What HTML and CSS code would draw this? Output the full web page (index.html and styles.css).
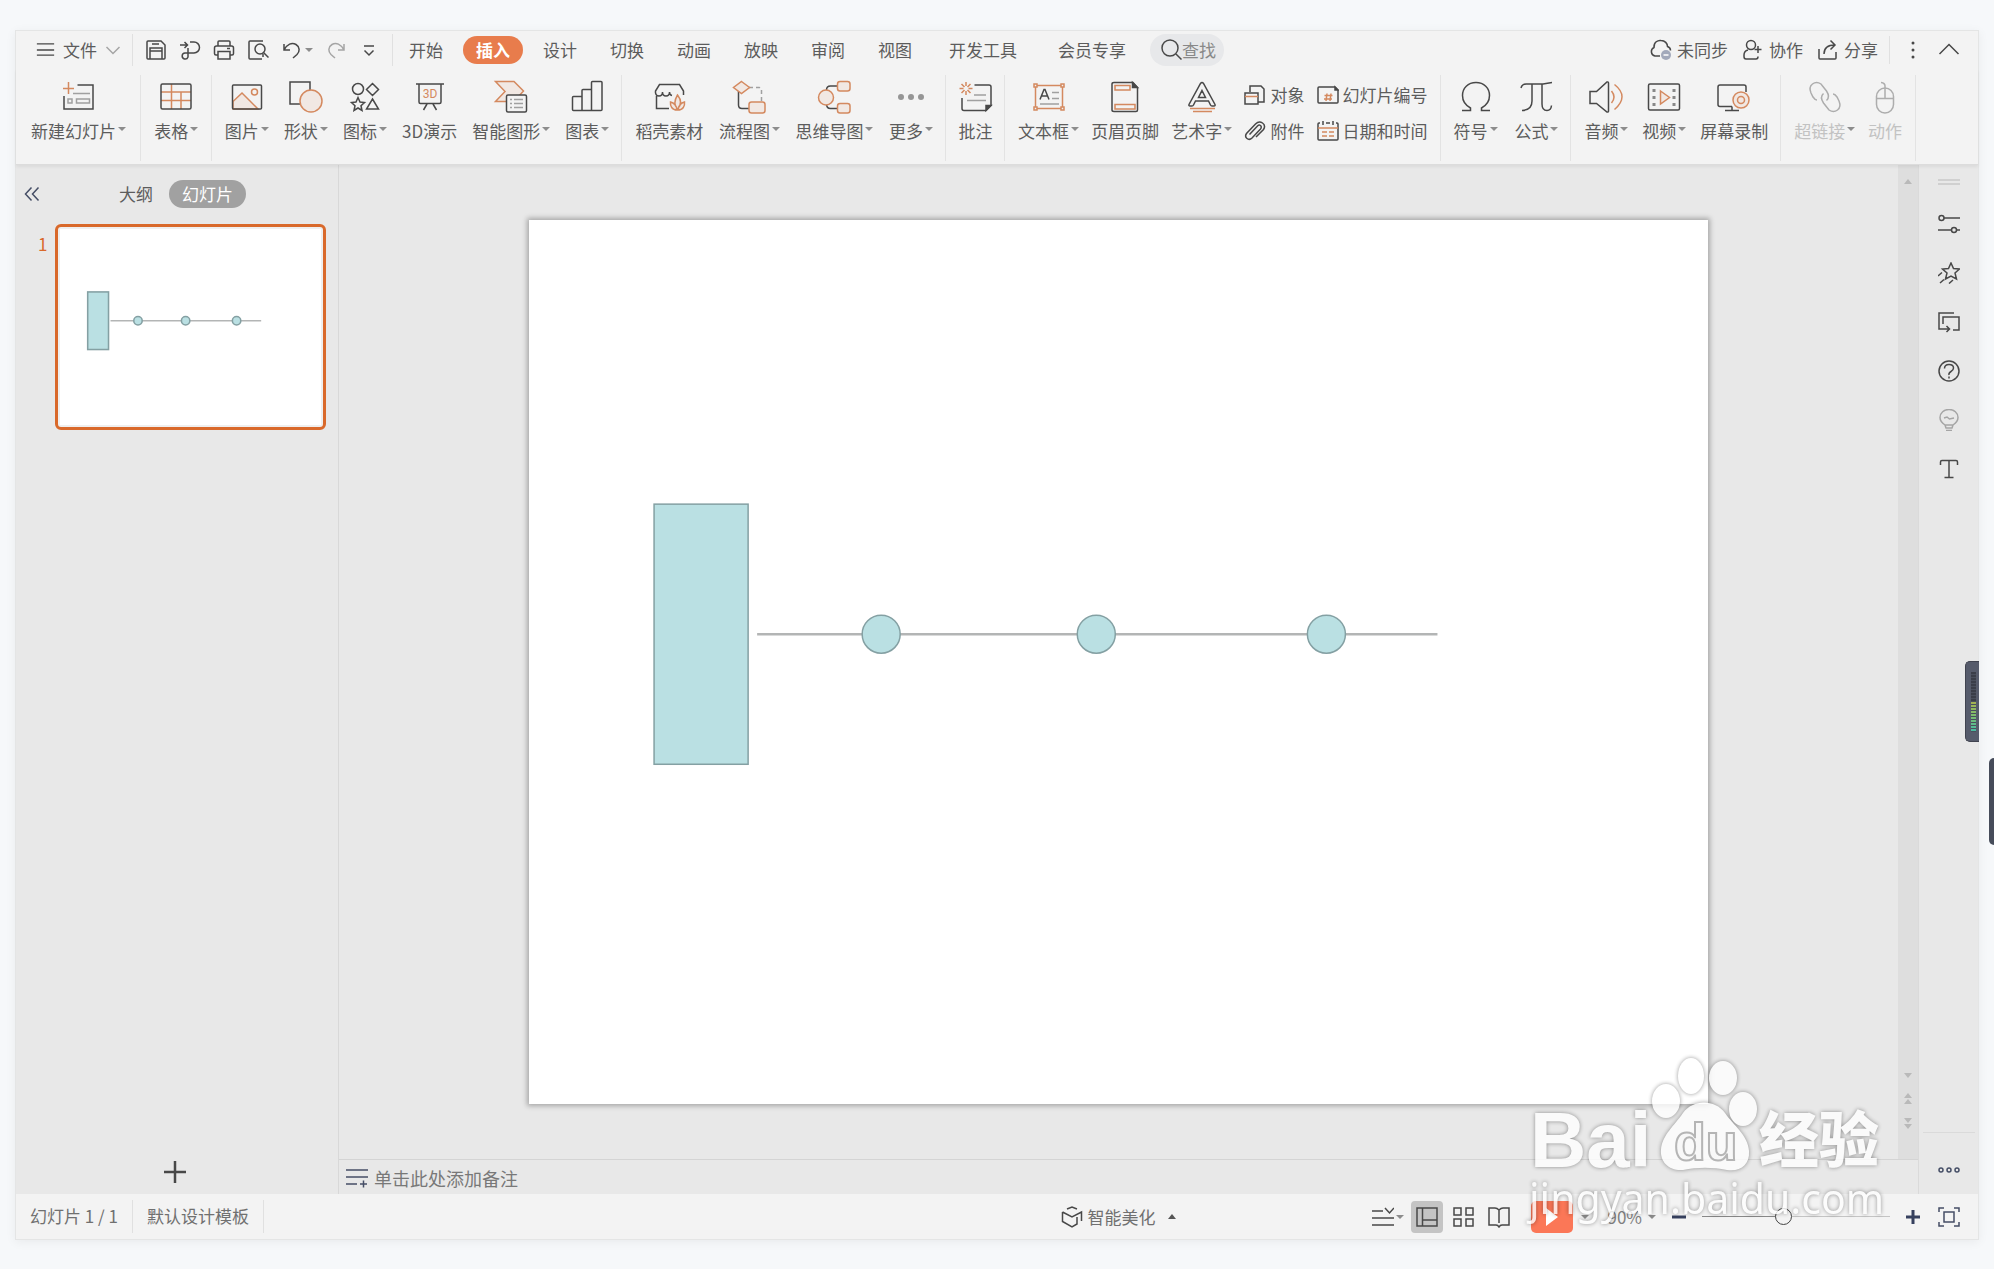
FILE: index.html
```html
<!DOCTYPE html>
<html lang="zh-CN">
<head>
  <meta charset="UTF-8" />
  <meta name="viewport" content="width=device-width, initial-scale=1.0"/>
  <title>演示文稿</title>
  <link rel="stylesheet" href="styles.css">
</head>
<body>
<div class="window">

  <!-- 菜单栏 -->
  <header class="menubar">
    <button class="file-menu">
      <svg class="icon-s" viewBox="0 0 22 22"><path d="M1 4h20M1 11h20M1 17h20"/></svg>
      <span>文件</span>
      <svg class="chevron light" viewBox="0 0 16 16"><path d="M1.500 5 8 11.500 14.500 5"/></svg>
    </button>
    <div class="quick">
      <button aria-label="保存"><svg class="icon-s" viewBox="0 0 22 22"><path d="M3 2h13l4 4v13q0 1-1 1H3q-1 0-1-1V3q0-1 1-1zM5 20V9h12v11M7 5h7M5 12h12"/></svg></button>
      <button aria-label="输出为PDF"><svg class="icon-s" viewBox="0 0 22 22"><path d="M1 6h7M5.500 3 8.500 6l-3 3M11 3h4a5.500 5.500 0 0 1 0 11H6a3 3 0 1 0 3 4V9"/></svg></button>
      <button aria-label="打印"><svg class="icon-s" viewBox="0 0 22 22"><path d="M5 7V3q0-1 1-1h10q1 0 1 1v4M5 16H3q-1.500 0-1.500-1.500V9q0-2 2-2h15q2 0 2 2v5.500q0 1.500-1.500 1.500h-2M5 12.500h12V20H5zM14 9.500h3"/></svg></button>
      <button aria-label="打印预览"><svg class="icon-s" viewBox="0 0 22 22"><path d="M15 20H3q-1 0-1-1V3q0-1 1-1h13M16 15v3"/><circle cx="13" cy="10" r="5"/><path d="m16.500 13.500 5 5"/></svg></button>
      <button aria-label="撤销" class="with-caret"><svg class="icon-s" viewBox="0 0 22 22"><path d="M3 5v6h6M3 11C6 5 11 3 15 5.500s4 7 1 10L12 19"/></svg><i class="caret"></i></button>
      <button aria-label="恢复"><svg class="icon-s faint" viewBox="0 0 22 22"><path d="M19 5v6h-6M19 11C16 5 11 3 7 5.500s-4 7-1 10L10 19"/></svg></button>
      <button aria-label="自定义快速访问工具栏"><svg class="icon-s" viewBox="0 0 22 22"><path d="M6 7h10M6.500 11.500 11 16l4.500-4.500"/></svg></button>
    </div>
    <nav class="tabs">
      <button>开始</button>
      <button class="active">插入</button>
      <button>设计</button>
      <button>切换</button>
      <button>动画</button>
      <button>放映</button>
      <button>审阅</button>
      <button>视图</button>
      <button class="wide">开发工具</button>
      <button class="wide">会员专享</button>
      <button class="search"><svg class="icon-s" viewBox="0 0 22 22"><circle cx="10" cy="9" r="8"/><path d="m16 15 5.500 5.500"/></svg>查找</button>
    </nav>
    <div class="account">
      <button><svg class="icon-s" viewBox="0 0 22 22"><path d="M10 17H5a4.500 4.500 0 0 1-1-8.500C3.500 3 8 1 11 1.500c4 0 6.500 3 6.500 6 2 .7 3 2 3 4"/><circle class="badge" cx="16" cy="16" r="5"/><path class="badge-line" d="M13.500 16h5"/></svg>未同步</button>
      <button><svg class="icon-s" viewBox="0 0 22 22"><circle cx="9" cy="6" r="4.500"/><path d="M6 11q-4 1-4 5v1.500Q2 20 4 20h10q2 0 2-2.500M16 7v7M12.500 10.500h7"/></svg>协作</button>
      <button><svg class="icon-s" viewBox="0 0 22 22"><path d="M2 10v9q0 1 1 1h15q1 0 1-1v-6M7 15c0-6 3-9 11-9M13.500 1.500 18 6l-4.500 4.500"/></svg>分享</button>
    </div>
    <div class="corner">
      <button aria-label="更多操作"><svg class="icon-s solid" viewBox="0 0 22 22"><circle cx="11" cy="4" r="1.500"/><circle cx="11" cy="11" r="1.500"/><circle cx="11" cy="18" r="1.500"/></svg></button>
      <button aria-label="折叠功能区"><svg class="icon-s" viewBox="0 0 22 22"><path d="m1.500 15 9.500-9.500L20.500 15"/></svg></button>
    </div>
  </header>

  <!-- 插入选项卡 -->
  <div class="ribbon">
    <div class="group centered">
      <button class="tool">
        <svg class="icon" viewBox="0 0 36 36"><path class="o" d="M3 9.500h11M8.500 3v12"/><path d="M17.500 6H33v24H4V17"/><path class="g" d="M13 14.500h17M8 20h4v4H8zM16.500 20h13v4h-13z"/></svg>
        <span class="label">新建幻灯片<i class="caret"></i></span>
      </button>
    </div>
    <div class="group centered">
      <button class="tool">
        <svg class="icon" viewBox="0 0 36 36"><path class="o" d="M13.500 5v25M3 13h30M3 21.500h30M23 13v17"/><rect x="3" y="5" width="30" height="25" rx="1.500"/></svg>
        <span class="label">表格<i class="caret"></i></span>
      </button>
    </div>
    <div class="group">
      <button class="tool">
        <svg class="icon" viewBox="0 0 36 36"><path class="of" d="M4 22.500 13 14l16 16H4z"/><circle class="o" cx="25.500" cy="13" r="3"/><rect x="3.500" y="6" width="29" height="24" rx="1"/></svg>
        <span class="label">图片<i class="caret"></i></span>
      </button>
      <button class="tool">
        <svg class="icon" viewBox="0 0 36 36"><path d="M2 3h20v22H2z"/><circle class="of" cx="23" cy="22" r="11"/></svg>
        <span class="label">形状<i class="caret"></i></span>
      </button>
      <button class="tool">
        <svg class="icon" viewBox="0 0 36 36"><circle cx="11" cy="10" r="5.500"/><path d="m25.500 4.500 6 6-6 6-6-6zM11 18.500l2 4.500 4.500.5-3.500 3.200 1 4.800-4-2.500-4 2.500 1-4.800-3.500-3.200L9 23zM25.500 20l6 10h-12z"/></svg>
        <span class="label">图标<i class="caret"></i></span>
      </button>
      <button class="tool">
        <svg class="icon" viewBox="0 0 36 36"><path d="M4 5h28M7 5v18q0 1.500 1.500 1.500h19q1.500 0 1.500-1.500V5M15 25l-3.500 6M21 25l3.500 6"/><text class="icon-text" x="18" y="19">3D</text></svg>
        <span class="label">3D演示</span>
      </button>
      <button class="tool">
        <svg class="icon" viewBox="0 0 36 36"><path class="of" d="M2.500 2.500H21l9.500 9.500L21 22.500H2.500l9.500-10z"/><rect class="bg" x="13.500" y="16" width="20" height="17" rx="1.500"/><path class="g" d="M17 20.500h2M21 20.500h9M17 24.500h2M21 24.500h9M17 28.500h2M21 28.500h9"/></svg>
        <span class="label">智能图形<i class="caret"></i></span>
      </button>
      <button class="tool">
        <svg class="icon" viewBox="0 0 36 36"><path d="M13 31.500H4.500q-1 0-1-1V18.500q0-1 1-1H13M13 31.500V11.500q0-1 1-1h8.500v21zM22.500 31.500v-28q0-1 1-1H32q1 0 1 1v27q0 1-1 1h-9.500"/></svg>
        <span class="label">图表<i class="caret"></i></span>
      </button>
    </div>
    <div class="group">
      <button class="tool">
        <svg class="icon" viewBox="0 0 36 36"><path d="M18 29.500H5.500V17M32.500 16v-4L28.500 5.500h-20L4.500 12v2q.5 3 3.500 3 3.500 0 3.500-4 0 4 3.500 4t3.500-4q0 3 2.500 3.500"/><path class="of" d="M26.500 30c-4-4-3-9 0-14 4 5 4 10 0 14zM26 31c-5 0-7-4-6.500-8 4 1 6 4 6.500 8zM27 31c5 0 7-4 6.500-8-4 1-6 4-6.500 8z"/></svg>
        <span class="label">稻壳素材</span>
      </button>
      <button class="tool">
        <svg class="icon" viewBox="0 0 36 36"><path d="M7.500 12v14q0 3.500 3.500 3.500h7"/><path class="g dash" d="M18 8.500h10q2.500 0 2.500 2.500v12"/><path class="of" d="m10.500 2.500 8 6-8 6-8-6z"/><rect class="of" x="18" y="23" width="16" height="11" rx="2.500"/></svg>
        <span class="label">流程图<i class="caret"></i></span>
      </button>
      <button class="tool">
        <svg class="icon" viewBox="0 0 36 36"><path d="M10.500 11q0-4 4-4H22M10.500 25q0 4.500 4 4.500H22"/><circle class="of" cx="10" cy="18.500" r="7.500"/><rect class="of" x="21.500" y="2.500" width="12.500" height="9.500" rx="2.500"/><rect class="of" x="21.500" y="24.500" width="12.500" height="9.500" rx="2.500"/></svg>
        <span class="label">思维导图<i class="caret"></i></span>
      </button>
      <button class="tool">
        <svg class="icon dots" viewBox="0 0 36 36"><circle cx="8" cy="18" r="3"/><circle cx="18" cy="18" r="3"/><circle cx="28" cy="18" r="3"/></svg>
        <span class="label">更多<i class="caret"></i></span>
      </button>
    </div>
    <div class="group centered">
      <button class="tool">
        <svg class="icon" viewBox="0 0 36 36"><path class="o" d="M8 3v4M8 12v4M1.500 9.500h4M10.500 9.500h4M3.500 5l3 3M9.500 11l3 3M12.500 5l-3 3M6.500 11l-3 3"/><path d="M16.500 6H31q2 0 2 2v18.500l-5 5H6q-2 0-2-2V19"/><path class="fill" d="M33 26.500h-5v5z"/><path class="g" d="M16 16h12M9 21.500h19"/></svg>
        <span class="label">批注</span>
      </button>
    </div>
    <div class="group">
      <button class="tool">
        <svg class="icon" viewBox="0 0 36 36"><path class="o" d="M5.500 6.500h27v23h-27z"/><path class="ob" d="M4 5h3v3H4zM31 5h3v3h-3zM4 28h3v3H4zM31 28h3v3h-3z"/><path d="m10 20.500 4-10 1 0 4 10M11.500 17h6"/><path class="g" d="M22 13.500h7M22 19.500h7M10 25h19"/></svg>
        <span class="label">文本框<i class="caret"></i></span>
      </button>
      <button class="tool">
        <svg class="icon" viewBox="0 0 36 36"><path d="M7 3.500h19l4.500 5V31q0 1.500-1.500 1.500H7q-2 0-2-1.500V5q0-1.500 2-1.500z"/><path class="fill" d="M25.500 3.500v5h5z"/><path class="o" d="M8 6.500h15v4.500H8zM8 25.500h20V30H8z"/></svg>
        <span class="label">页眉页脚</span>
      </button>
      <button class="tool">
        <svg class="icon" viewBox="0 0 36 36"><path d="M16.500 4.500q1.500-2 3 0l11.500 21q.5 1.500-1 1.500h-2q-1 0-1.500-1L24.500 22h-13l-2 4q-.5 1-1.500 1H6q-1.500 0-1-1.500zM18 11.500l3.500 7h-7z"/><path class="o" d="M6 29.500h25M9 32.500h19"/></svg>
        <span class="label">艺术字<i class="caret"></i></span>
      </button>
      <div class="stack">
        <button><svg class="icon-s" viewBox="0 0 22 22"><path d="M6 8V2h11l3 3v13h-6"/><path d="M1 9h13v11H1z"/><path class="o" d="M1 12.500h13"/></svg>对象</button>
        <button><svg class="icon-s" viewBox="0 0 22 22"><path d="m5.500 14.500 8-8.500q1.500-1.500 3-.5 1.500 1.500 0 3.500l-8.500 9q-2.500 2.500-5 .5t-.5-5L11.500 4q3.500-3.500 7-1t1 6.500L12 17"/></svg>附件</button>
      </div>
      <div class="stack">
        <button><svg class="icon-s" viewBox="0 0 22 22"><path d="M2 3h16l3 3v12q0 1-1 1H2q-1 0-1-1V4q0-1 1-1z"/><path class="fill" d="M18 3v3h3z"/><path class="o" d="M10 9.500 9 17M14 9.500 13 17M7.500 11.500h8M7 15h8"/></svg>幻灯片编号</button>
        <button><svg class="icon-s" viewBox="0 0 22 22"><path d="M3 3H2Q1 3 1 4v15q0 1 1 1h18q1 0 1-1V4q0-1-1-1h-1M6 1v4M16 1v4M9 3h4"/><path class="o" d="M1 8h20M5 12h5M12 12h5M5 16h5M12 16h5"/></svg>日期和时间</button>
      </div>
    </div>
    <div class="group">
      <button class="tool">
        <svg class="icon" viewBox="0 0 36 36"><path d="M4 31.500h8.500V29C7 26 4.500 21.500 4.500 16.500 4.500 9 10 3.500 18 3.500S31.500 9 31.500 16.500c0 5-2.500 9.500-8 12.500v2.500H32"/></svg>
        <span class="label">符号<i class="caret"></i></span>
      </button>
      <button class="tool">
        <svg class="icon" viewBox="0 0 36 36"><path d="M3 9q1-4 5-4h17l9-1.500M14 5v17q0 9-10 9.500M24 5v20q0 6.500 5 6.500 4 0 4.500-5"/></svg>
        <span class="label">公式<i class="caret"></i></span>
      </button>
    </div>
    <div class="group">
      <button class="tool">
        <svg class="icon" viewBox="0 0 36 36"><path d="M2 12.500h6.500L19 3q1.500-.5 1.500 1v28q0 1.500-1.500 1L8.500 24.500H2z"/><path class="o" d="M23.500 12q5 6 0 12M26.500 5.500q15 12 0 25"/></svg>
        <span class="label">音频<i class="caret"></i></span>
      </button>
      <button class="tool">
        <svg class="icon" viewBox="0 0 36 36"><rect x="2.500" y="5" width="31" height="26" rx="1.500"/><path class="of" d="m14.500 12 9 6.500-9 6.500z"/><path class="ticks" d="M8 10v3M8 17v3M8 24v3M28 10v3M28 17v3M28 24v3"/></svg>
        <span class="label">视频<i class="caret"></i></span>
      </button>
      <button class="tool">
        <svg class="icon" viewBox="0 0 36 36"><path d="M16 27.500H4q-2 0-2-2V8q0-2 2-2h24q2 0 2 2v5M16 27.500v4M9 31.500h14"/><circle class="of" cx="25" cy="21" r="8"/><circle class="o" cx="25" cy="21" r="3.500"/></svg>
        <span class="label">屏幕录制</span>
      </button>
    </div>
    <div class="group">
      <button class="tool disabled" disabled>
        <svg class="icon" viewBox="0 0 36 36"><path d="M10 21q-2 0-4-3l-2-4Q1.500 8 5.500 5T14 5l5.500 7q4 6 0 9.500M26 15q2 0 4 3l2 4q2.500 6-1.500 9t-8.500 0l-5.500-7q-4-6 0-9.500"/></svg>
        <span class="label">超链接<i class="caret"></i></span>
      </button>
      <button class="tool disabled" disabled>
        <svg class="icon" viewBox="0 0 36 36"><rect x="9.500" y="9" width="17" height="25" rx="8.500"/><path d="M9.500 19.500h17M18 19.500V7q0-3-4-3.500"/></svg>
        <span class="label">动作</span>
      </button>
    </div>
  </div>

  <div class="body">
    <!-- 幻灯片缩略图 -->
    <aside class="outline">
      <div class="outline-head">
        <button aria-label="收起窗格"><svg class="chevron navy" viewBox="0 0 16 16"><path d="M7.500 1.500 1.500 8l6 6.500M14.500 1.500 8.500 8l6 6.500"/></svg></button>
        <div class="outline-tabs">
          <button>大纲</button>
          <button class="active">幻灯片</button>
        </div>
      </div>
      <div class="thumb-row">
        <span class="num">1</span>
        <button class="thumb" aria-label="第 1 张幻灯片">
          <svg viewBox="0 0 1178 884">
            <path class="axis" d="M228 414h680"/>
            <rect class="shape" x="125" y="284" width="94" height="260"/>
            <circle class="shape" cx="352" cy="414" r="19"/>
            <circle class="shape" cx="567" cy="414" r="19"/>
            <circle class="shape" cx="797" cy="414" r="19"/>
          </svg>
        </button>
      </div>
      <button class="add" aria-label="新建幻灯片"><svg class="icon-s" viewBox="0 0 22 22"><path d="M0 11h22M11 0v22"/></svg></button>
    </aside>

    <!-- 编辑区 -->
    <main class="editor">
      <div class="stage">
        <div class="canvas">
          <svg class="slide" viewBox="0 0 1178 884">
            <path class="axis" d="M228 414h680"/>
            <rect class="shape" x="125" y="284" width="94" height="260"/>
            <circle class="shape" cx="352" cy="414" r="19"/>
            <circle class="shape" cx="567" cy="414" r="19"/>
            <circle class="shape" cx="797" cy="414" r="19"/>
          </svg>
        </div>
        <div class="scrollbar">
          <svg viewBox="0 0 20 20"><path d="M6 13h8l-4-5z"/></svg>
          <div class="scroll-nav">
            <svg viewBox="0 0 20 20"><path d="M6 8h8l-4 5z"/></svg>
            <svg viewBox="0 0 20 20"><path d="M6 9h8l-4-5zM6 15h8l-4-5z"/></svg>
            <svg viewBox="0 0 20 20"><path d="M6 5h8l-4 5zM6 11h8l-4 5z"/></svg>
          </div>
        </div>
      </div>
      <button class="notes">
        <svg class="icon-s navy" viewBox="0 0 22 22"><path d="M0 3h22M0 10h22M0 17h11M14 17h7M17.500 13.500v7"/></svg>
        单击此处添加备注
      </button>
    </main>

    <!-- 右侧任务栏 -->
    <aside class="rail">
      <svg class="grip" viewBox="0 0 22 8"><path d="M0 2h22M0 6h22"/></svg>
      <button aria-label="对象属性"><svg class="icon-s" viewBox="0 0 22 22"><circle cx="3.500" cy="5" r="2.500"/><path d="M6 5h16M0 17h13M19 17h3"/><circle cx="16" cy="17" r="2.500"/></svg></button>
      <button aria-label="动画"><svg class="icon-s" viewBox="0 0 22 22"><path d="m13 1 2.500 5.500 6 .5-4.500 4 1.500 6-5.500-3-5.500 3L9 11 4.500 7l6-.5zM0 14l4-3.500M2 21l4-3.500M11 21.500l4-3.500"/></svg></button>
      <button aria-label="幻灯片切换"><svg class="icon-s" viewBox="0 0 22 22"><path d="M16 2H1v16h10M8.500 15l3 3-3 3M5 13V6h16v13h-6"/></svg></button>
      <button aria-label="帮助"><svg class="icon-s" viewBox="0 0 22 22"><circle cx="11" cy="11" r="10"/><path d="M6.500 8.500Q6.500 4.500 11 4.500t4.500 3.500q0 2-2.500 3.500t-2 3.500M11 16.500v2"/></svg></button>
      <button aria-label="备选推荐"><svg class="icon-s faint" viewBox="0 0 22 22"><path d="M7 16c-3-2-5-4-5-7.500C2 4 6 .5 11 .5S20 4 20 8.500c0 3.500-2 5.500-5 7.500zM7 16l1 3h6l1-3M8 21.500h6M6 9l3-1 2.500 2L16 9"/></svg></button>
      <button aria-label="文本"><svg class="icon-s" viewBox="0 0 22 22"><path d="M2.500 7V4q0-1.500 1.500-1.500h14q1.500 0 1.500 1.500v3M11 2.500v17M6.500 19.500h9"/></svg></button>
      <button class="rail-more" aria-label="更多"><svg class="icon-s navy" viewBox="0 0 22 22"><circle cx="3" cy="11" r="2"/><circle cx="11" cy="11" r="2"/><circle cx="19" cy="11" r="2"/></svg></button>
    </aside>
  </div>

  <!-- 状态栏 -->
  <footer class="status">
    <span class="cell">幻灯片 1 / 1</span>
    <span class="cell">默认设计模板</span>
    <button class="beautify">
      <svg class="icon-s" viewBox="0 0 22 22"><path d="m6 3 5-2 5 2M1.500 6v9.500l9.500 5.500 5-3v-7M1.500 6l9.500 5 9.500-5v9"/></svg>
      智能美化<i class="caret up"></i>
    </button>
    <div class="views">
      <button class="with-caret" aria-label="备注"><svg class="icon-s" viewBox="0 0 22 22"><path d="M0 5h11M13 2l4.500 5L22 2M0 12h22M0 19h22"/></svg><i class="caret"></i></button>
      <button class="active" aria-label="普通视图"><svg class="icon-s" viewBox="0 0 22 22"><path d="M1 2h20v18H1zM6.500 2v18M6.500 14H21"/></svg></button>
      <button aria-label="浏览视图"><svg class="icon-s" viewBox="0 0 22 22"><path d="M1 2h7v7H1zM13 2h7v7h-7zM1 13h7v7H1zM13 13h7v7h-7z"/></svg></button>
      <button aria-label="阅读视图"><svg class="icon-s" viewBox="0 0 22 22"><path d="M11 4Q9 2 7 2H1v17h7q2 0 3 2 1-2 3-2h7V2h-6q-2 0-4 2zM11 4v13"/></svg></button>
    </div>
    <button class="play" aria-label="播放"><svg viewBox="0 0 12 18"><path d="M0 0v18l12-9z"/></svg></button>
    <i class="caret"></i>
    <button class="percent">90%<i class="caret"></i></button>
    <div class="zoom">
      <button aria-label="缩小"><svg viewBox="0 0 14 14"><path d="M0 7h14"/></svg></button>
      <input type="range" min="0" max="1000" value="424" aria-label="缩放比例">
      <button aria-label="放大"><svg viewBox="0 0 14 14"><path d="M0 7h14M7 0v14"/></svg></button>
    </div>
    <button class="fit" aria-label="最佳显示比例"><svg class="icon-s navy" viewBox="0 0 22 22"><path d="M1 6V2h5M16 2h5v4M21 16v4h-5M6 20H1v-4M6 6h10v10H6z"/></svg></button>
  </footer>

  <div class="meter"><div class="meter-bars"></div></div>
</div>
<div class="edge-tab"></div>

<!-- 水印 -->
<svg class="watermark" viewBox="0 0 370 180">
  <g class="mark">
    <ellipse cx="145" cy="75" rx="14" ry="17"/>
    <ellipse cx="170" cy="50" rx="13" ry="18"/>
    <ellipse cx="202" cy="52" rx="14" ry="17"/>
    <ellipse cx="222" cy="83" rx="14" ry="17"/>
    <path d="M162 87c10-14 32-14 42 0 8 12 23 22 24 38 1 14-9 21-22 19-14-3-30-3-44 0-14 1-23-8-22-20 1-15 14-25 22-37z"/>
    <text class="bai" x="9" y="141">Bai</text>
    <text class="jy" x="238" y="136">经验</text>
    <text class="url" x="8" y="188">jingyan.baidu.com</text>
  </g>
  <text class="du" x="153" y="134">du</text>
</svg>
</body>
</html>
```
FILE: styles.css
```css
* {
  box-sizing: border-box;
  margin: 0;
  padding: 0;
}

body {
  height: 100vh;
  padding: 30px 15px 29px;
  overflow: hidden;
  position: relative;
  background: #f6f8fa;
  color: #5c5c5c;
  font-family: "Noto Sans CJK SC", sans-serif;
  font-size: 17px;
  font-weight: 400;
  line-height: 24px;
}

button {
  border: none;
  background: none;
  color: inherit;
  font: inherit;
  white-space: nowrap;
  cursor: pointer;
  display: flex;
  align-items: center;
}

svg {
  display: block;
  flex: none;
  fill: none;
  stroke: #484848;
  stroke-width: 1.5;
}

.window {
  height: 100%;
  position: relative;
  display: flex;
  flex-direction: column;
  background: #f3f3f3;
  border: 1px solid #e4e5e5;
  box-shadow: 0 2px 10px rgba(0, 0, 0, 0.06);
}

.icon {
  width: 36px;
  height: 36px;
}

.icon-s {
  width: 22px;
  height: 22px;
}

.chevron {
  width: 16px;
  height: 16px;
}

.light, .faint {
  stroke: #a5a5a5;
}

.navy {
  stroke: #454e66;
}

.solid {
  fill: #484848;
  stroke: none;
}

.o {
  stroke: #d4895f;
}

.of {
  stroke: #d4895f;
  fill: #f1e8e3;
}

.ob {
  stroke: #d4895f;
  fill: #f3f3f3;
}

.g {
  stroke: #a0a0a0;
}

.bg {
  fill: #f3f3f3;
}

.fill {
  fill: #484848;
}

.dash {
  stroke-dasharray: 4 3;
}

.ticks {
  stroke: #888;
  stroke-width: 3;
}

.icon-text {
  fill: #d4895f;
  stroke: none;
  font-family: Roboto, sans-serif;
  font-size: 12px;
  text-anchor: middle;
}

.dots {
  fill: #959595;
  stroke: none;
}

.caret {
  flex: none;
  width: 0;
  height: 0;
  border: 4px solid transparent;
  border-top-color: #8c8c8c;
  border-bottom: none;
}

.caret.up {
  border-top: none;
  border-bottom: 5px solid #555;
  margin-left: 9px;
}

/* 菜单栏 */
.menubar {
  height: 38px;
  flex: none;
  display: flex;
  align-items: center;
}

.file-menu {
  padding: 0 11px 0 20px;
  gap: 8px;
}

.file-menu .icon-s {
  width: 19px;
}

.quick {
  height: 32px;
  display: flex;
  align-items: center;
  gap: 12px;
  padding: 0 12px;
  border: 1px solid #e0e0e0;
  border-width: 0 1px;
}

.quick button:last-child {
  margin-left: -1px;
}

.with-caret {
  gap: 2px;
}

.tabs {
  display: flex;
  align-items: center;
  gap: 7px;
  padding-left: 3px;
}

.tabs button {
  height: 28px;
  padding: 0 13px;
  border-radius: 14px;
}

.tabs .wide {
  padding: 0 17px;
}

.tabs .active {
  background: #e87c4c;
  color: #fff;
  font-weight: 700;
}

.tabs .search {
  height: 32px;
  padding: 0 8px 0 10px;
  border-radius: 16px;
  background: #e7e8ea;
  color: #888;
}

.account {
  margin-left: auto;
  height: 28px;
  display: flex;
  align-items: center;
  gap: 14px;
  padding-right: 11px;
  border-right: 1px solid #e0e0e0;
}

.account button {
  gap: 5px;
}

.badge {
  fill: #a2a9bb;
  stroke: none;
}

.badge-line {
  stroke: #fff;
}

.corner {
  display: flex;
  gap: 14px;
  padding: 0 18px 0 12px;
}

/* 功能区 */
.ribbon {
  height: 96px;
  flex: none;
  display: grid;
  grid-template-columns: 125fr 71fr 411fr 324fr 59fr 436fr 131fr 210fr 135fr 62fr;
  padding: 6px 0 3px;
  border-bottom: 1px solid #dcdcdc;
  box-shadow: 0 2px 3px rgba(0, 0, 0, 0.06);
  z-index: 1;
}

.group {
  min-width: 0;
  display: flex;
  align-items: flex-start;
  justify-content: space-between;
  padding: 4px 12px 0 13px;
  border-right: 1px solid #e3e3e3;
}

.centered {
  justify-content: center;
}

.tool {
  flex-direction: column;
  gap: 4px;
}

.label {
  display: flex;
  align-items: center;
}

.label .caret {
  margin: 0 0 5px 2px;
}

.disabled {
  color: #c2c2c2;
}

.disabled svg {
  stroke: #adadad;
}

.stack {
  display: flex;
  flex-direction: column;
  gap: 12px;
  padding-top: 4px;
}

.stack button {
  gap: 4px;
}

/* 工作区 */
.body {
  flex: 1;
  min-height: 0;
  display: flex;
  background: #e8e8e8;
}

.outline {
  width: 323px;
  flex: none;
  display: flex;
  flex-direction: column;
  border-right: 1px solid #d8d8d8;
}

.outline-head {
  display: flex;
  align-items: center;
  padding: 15px 8px 16px;
}

.outline-tabs {
  display: flex;
  align-items: center;
  gap: 16px;
  padding-left: 79px;
}

.outline-tabs .active {
  height: 28px;
  padding: 0 13px;
  border-radius: 14px;
  background: #a1a1a1;
  color: #fff;
}

.thumb-row {
  display: flex;
  gap: 9px;
  padding-left: 22px;
}

.num {
  width: 8px;
  padding-top: 8px;
  color: #d9692b;
}

.thumb {
  width: 271px;
  padding: 2px;
  border: 3px solid #d9692b;
  border-radius: 6px;
  background: #efefef;
}

.thumb svg {
  width: 100%;
  background: #fff;
}

.axis {
  stroke: #b3b5b5;
  stroke-width: 2.5;
}

.shape {
  fill: #bae0e3;
  stroke: #84a0a3;
  stroke-width: 1.5;
}

.thumb .axis,
.thumb .shape {
  stroke-width: 7;
}

.add {
  margin: auto auto 11px 148px;
}

.add svg {
  stroke-width: 2.5;
}

.editor {
  flex: 1;
  min-width: 0;
  display: flex;
  flex-direction: column;
}

.stage {
  flex: 1;
  min-height: 0;
  display: flex;
}

.canvas {
  flex: 1;
  display: flex;
  align-items: center;
  justify-content: center;
}

.slide {
  width: 75.6%;
  background: #fff;
  box-shadow: 0 0 5px 2px rgba(0, 0, 0, 0.28);
}

.scrollbar {
  width: 20px;
  display: flex;
  flex-direction: column;
  justify-content: space-between;
  padding: 6px 0 26px;
  background: #dedede;
}

.scrollbar svg {
  fill: #b9b9b9;
  stroke: none;
}

.scroll-nav {
  display: grid;
  gap: 4px;
}

.notes {
  height: 35px;
  padding: 2px 7px 0;
  gap: 6px;
  border-top: 1px solid #d4d4d4;
  font-size: 18px;
  color: #787878;
}

.rail {
  width: 60px;
  flex: none;
  display: flex;
  flex-direction: column;
  align-items: center;
  gap: 27px;
  padding: 13px 0;
  border-left: 1px solid #dadada;
}

.grip {
  width: 22px;
  height: 8px;
  stroke: #c8c8c8;
}

.rail-more {
  margin-top: auto;
  width: 52px;
  justify-content: center;
  padding-top: 26px;
  border-top: 1px solid #dadada;
}

/* 状态栏 */
.status {
  height: 45px;
  flex: none;
  display: flex;
  align-items: center;
  color: #707070;
}

.cell {
  height: 33px;
  padding: 4px 14px;
  border-right: 1px solid #e0e0e0;
}

.beautify {
  margin-left: auto;
  margin-right: 196px;
  gap: 4px;
}

.views {
  display: flex;
  align-items: center;
  gap: 7px;
  margin-right: 18px;
}

.views button {
  height: 32px;
  padding: 0 3px;
}

.views .active {
  padding: 0 5px;
  border-radius: 4px;
  background: #c4c4c4;
}

.views .with-caret {
  padding: 0;
}

.play {
  width: 42px;
  height: 32px;
  justify-content: center;
  margin-right: 8px;
  border-radius: 5px;
  background: #fb7757;
}

.play svg {
  width: 12px;
  height: 18px;
  fill: #fff;
  stroke: none;
}

.percent {
  gap: 6px;
  margin: 0 16px 0 18px;
  color: #808080;
}

.zoom {
  display: flex;
  align-items: center;
  gap: 16px;
}

.zoom svg {
  width: 14px;
  height: 14px;
  stroke: #36405e;
  stroke-width: 3;
}

.zoom input {
  width: 188px;
  height: 18px;
  appearance: none;
  background: linear-gradient(90deg, #888 43%, #c4c4c4 43%) center / 100% 1px no-repeat;
}

.zoom input::-webkit-slider-thumb {
  appearance: none;
  width: 17px;
  height: 17px;
  border: 1px solid #444;
  border-radius: 50%;
  background: #f3f3f3;
}

.fit {
  margin: 0 18px;
}

/* 浮动部件 */
.meter {
  position: absolute;
  right: -1px;
  top: 630px;
  width: 14px;
  height: 81px;
  padding: 10px 3px 9px 5px;
  border: 1px solid #40434f;
  border-right: none;
  border-radius: 5px 0 0 5px;
  background: #565b6b;
}

.meter-bars {
  height: 100%;
  background:
    repeating-linear-gradient(transparent 0 2px, #4a4f5c 2px 3px),
    linear-gradient(#3b3e49 48%, #a9b04e 48%, #78bd72 75%, #45b9a6);
}

.edge-tab {
  position: absolute;
  right: 0;
  top: 758px;
  width: 5px;
  height: 87px;
  border-radius: 5px 0 0 5px;
  background: #464c5a;
}

.watermark {
  position: absolute;
  right: 103px;
  bottom: 63px;
  width: 370px;
  height: 180px;
  overflow: visible;
  pointer-events: none;
  stroke: none;
}

.mark {
  fill: #fff;
  opacity: 0.8;
  filter: drop-shadow(0 0 2px rgba(0, 0, 0, 0.5));
}

.bai {
  font-family: "Liberation Sans", sans-serif;
  font-weight: 700;
  font-size: 78px;
}

.jy {
  font-weight: 900;
  font-size: 60px;
}

.url {
  font-family: "Noto Sans", sans-serif;
  font-size: 41px;
  font-weight: 400;
}

.du {
  font-family: "Liberation Sans", sans-serif;
  font-size: 52px;
  font-weight: 700;
  fill: #f8f8f8;
  stroke: #b5b5b5;
  stroke-width: 2;
}
```
